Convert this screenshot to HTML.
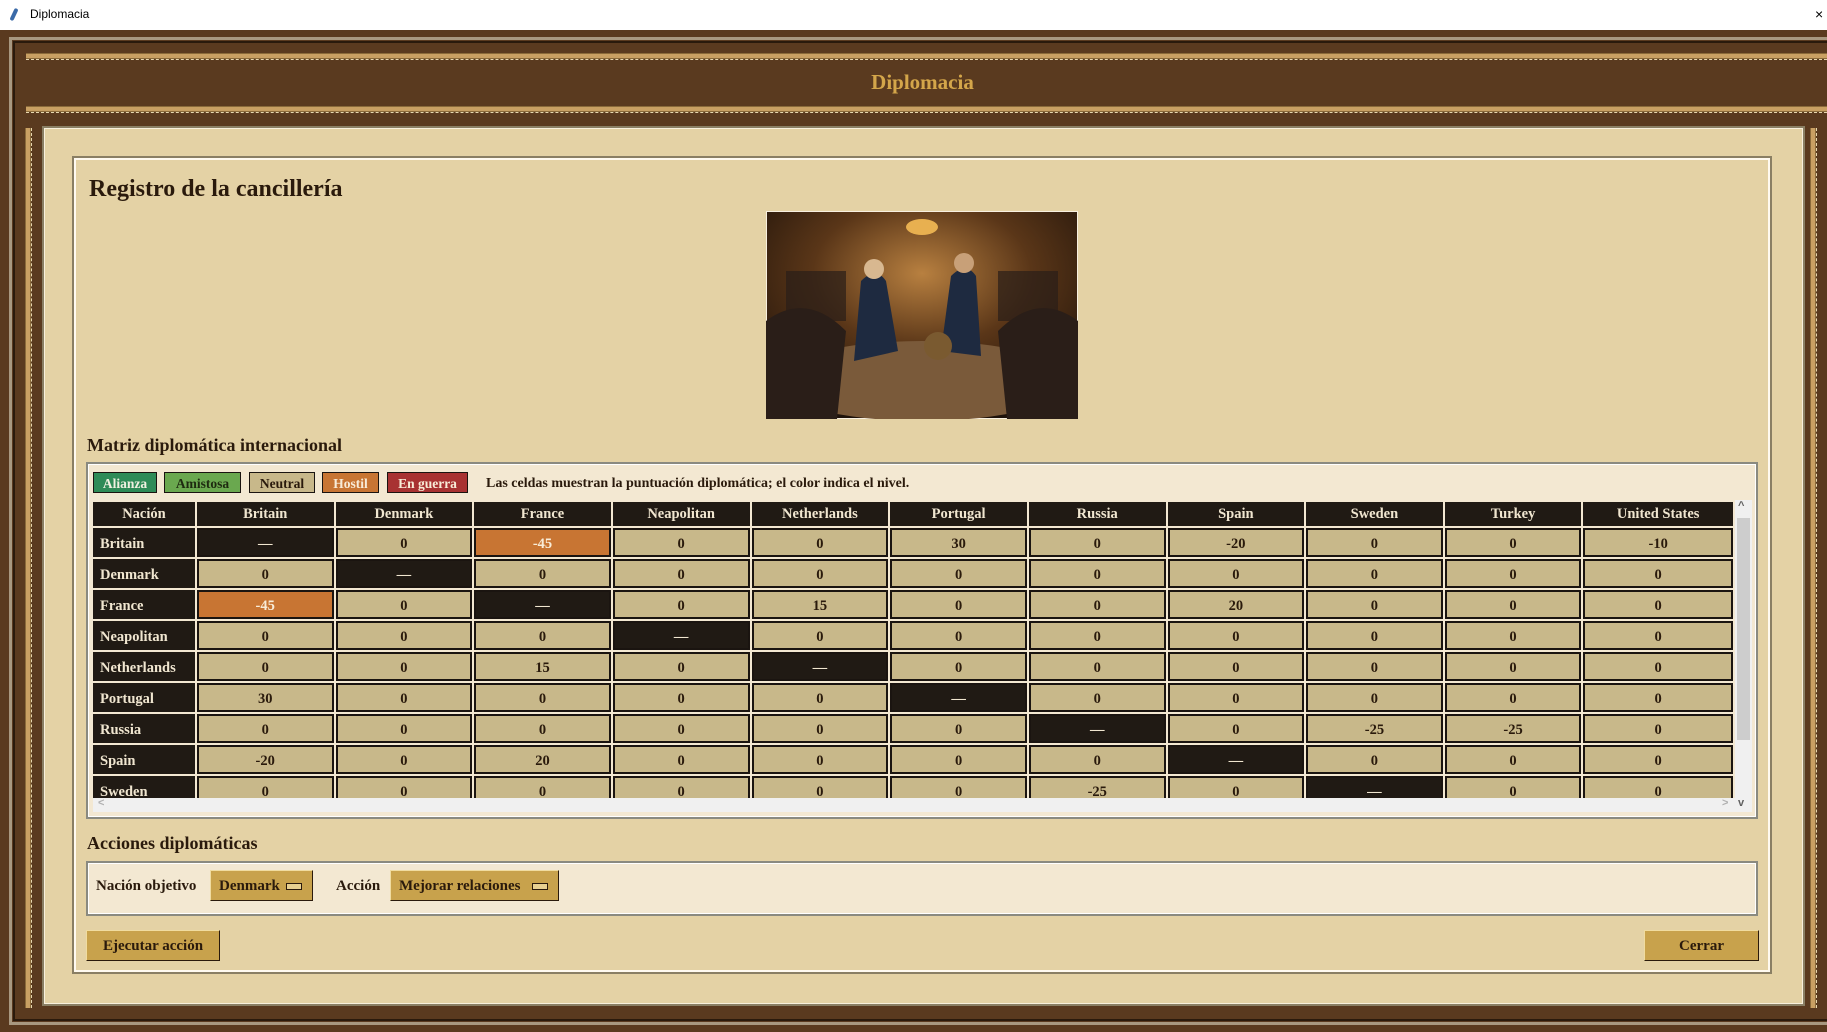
<!DOCTYPE html>
<html><head><meta charset="utf-8"><style>
*{margin:0;padding:0;box-sizing:border-box}
body{width:1827px;height:1032px;overflow:hidden;background:#5a3a1f;position:relative;font-family:"Liberation Serif",serif;font-weight:bold;color:#2a1a0c}
.a{position:absolute}
.rail{position:absolute;height:6px;background:#c9a063;border-top:1px solid #8a6a3a;border-bottom:1px solid #8a6a3a}
.rail:after{content:"";position:absolute;left:0;right:0;top:5px;border-top:1px dashed #e8d8b0}
.vrail{position:absolute;width:6px;background:#c9a063;border-left:1px solid #8a6a3a;border-right:1px solid #8a6a3a}
.vrail:after{content:"";position:absolute;top:0;bottom:0;left:5px;border-left:1px dashed #e8d8b0}
.btn{position:absolute;background:#c8a24c;border:1px solid #f0dca0;border-right-color:#2a1a0c;border-bottom-color:#2a1a0c;font-size:15px;line-height:30px;padding-left:8px}
.mb:after{content:"";position:absolute;right:10px;top:12px;width:14px;height:5px;background:#e8d090;border:1px solid #2a1a0c}
.leg{position:absolute;top:472px;height:21px;border:1px solid #1a1410;font-size:13.5px;line-height:21px;text-align:center}
table{border-collapse:separate;border-spacing:2px;font-size:14.5px;table-layout:fixed}
td{height:29px;border:2px solid #1a1410;background:#c8b88a;text-align:center;padding:3px 0 0 0}
td.d{background:#201a14;color:#f0e6d0}
td.h{background:#c87533;color:#f8ecd8}
td.l{background:#201a14;color:#f0e6d0;text-align:left;padding-left:5px;border-color:#201a14}
tr.hd td{background:#201a14;color:#f0e6d0;height:24px;border-color:#201a14;padding-top:1px}
</style></head><body>
<div class="a" style="left:0;top:0;width:1827px;height:30px;background:#fff;font-family:'Liberation Sans',sans-serif;font-weight:normal;font-size:12px;line-height:28px;color:#000;padding-left:30px">Diplomacia</div>
<div class="a" style="left:12px;top:8px;width:4px;height:13px;background:#3a6aa8;transform:rotate(25deg);border-radius:2px"></div>
<div class="a" style="left:1815px;top:6px;font-family:'Liberation Sans',sans-serif;font-weight:normal;font-size:14px;color:#000">×</div>
<div class="a" style="left:9px;top:37px;width:1818px;height:988px;border:3px solid #a89880;border-right:none"></div>
<div class="a" style="left:13px;top:41px;width:1814px;height:980px;border:2px solid #2a1a0c;border-right:none"></div>
<div class="rail" style="left:26px;top:53px;width:1801px"></div>
<div class="rail" style="left:26px;top:106px;width:1801px"></div>
<div class="a" style="left:0;width:1827px;top:70px;text-align:center;font-size:21px;color:#d4a64a;padding-left:18px">Diplomacia</div>
<div class="vrail" style="left:25px;top:128px;height:880px"></div>
<div class="vrail" style="left:1810px;top:128px;height:880px"></div>
<div class="a" style="left:42px;top:126px;width:1763px;height:880px;background:#e4d2a5;border:2px solid #8a7f64;box-shadow:inset 0 0 0 1px #f8f0dc"></div>
<div class="a" style="left:72px;top:156px;width:1700px;height:818px;border:2px solid #8a7f64;box-shadow:inset 0 0 0 2px #fffaf0"></div>
<div class="a" style="left:89px;top:176px;font-size:24px">Registro de la cancillería</div>
<svg class="a" style="left:766px;top:211px" width="312" height="208" viewBox="0 0 312 208">
<defs><radialGradient id="g" cx="50%" cy="30%" r="70%"><stop offset="0" stop-color="#b88040"/><stop offset=".5" stop-color="#5a3618"/><stop offset="1" stop-color="#1e120a"/></radialGradient></defs>
<rect width="312" height="208" fill="url(#g)" stroke="#f8f0e0" stroke-width="2"/>
<ellipse cx="156" cy="16" rx="16" ry="8" fill="#e8b050"/>
<rect x="20" y="60" width="60" height="50" fill="#2a1e18" opacity=".7"/><rect x="232" y="60" width="60" height="50" fill="#2a1e18" opacity=".7"/>
<ellipse cx="156" cy="170" rx="150" ry="40" fill="#7a5a3a"/>
<path d="M95 70 q15 -15 25 0 l12 70 l-44 10z" fill="#1e2a40"/>
<path d="M185 65 q15 -15 25 0 l5 80 l-40 -5z" fill="#1e2a40"/>
<circle cx="108" cy="58" r="10" fill="#d8b890"/><circle cx="198" cy="52" r="10" fill="#c8a078"/>
<path d="M0 110 q40 -30 80 10 l-10 98 h-70z" fill="#2a1e18"/>
<path d="M312 110 q-40 -30 -80 10 l10 98 h70z" fill="#2a1e18"/>
<circle cx="172" cy="135" r="14" fill="#7a5a30"/>
</svg>
<div class="a" style="left:87px;top:435px;font-size:18px">Matriz diplomática internacional</div>
<div class="a" style="left:86px;top:462px;width:1672px;height:357px;background:#f3e8d2;border:2px solid #8a8a80;box-shadow:inset 0 0 0 1px #fff"></div>
<div class="leg" style="left:93px;width:64px;background:#2e8b57;color:#f0f0e0">Alianza</div>
<div class="leg" style="left:164px;width:77px;background:#6aa84f;color:#1e2a10">Amistosa</div>
<div class="leg" style="left:249px;width:66px;background:#c8b88a;color:#2a1a0c">Neutral</div>
<div class="leg" style="left:322px;width:57px;background:#c87533;color:#f8ecd8">Hostil</div>
<div class="leg" style="left:387px;width:81px;background:#a83232;color:#f8ecd8">En guerra</div>
<div class="a" style="left:486px;top:476px;font-size:14px">Las celdas muestran la puntuación diplomática; el color indica el nivel.</div>
<div class="a" style="left:93px;top:500px;width:1642px;height:298px;overflow:hidden;background:#f3e8d2">
<table style="margin-left:-2px">
<colgroup><col style="width:102px"><col span="10" style="width:137px"><col style="width:150px"></colgroup>
<tr class="hd"><td>Nación</td><td>Britain</td><td>Denmark</td><td>France</td><td>Neapolitan</td><td>Netherlands</td><td>Portugal</td><td>Russia</td><td>Spain</td><td>Sweden</td><td>Turkey</td><td>United States</td></tr>
<tr><td class="l">Britain</td><td class="d">—</td><td>0</td><td class="h">-45</td><td>0</td><td>0</td><td>30</td><td>0</td><td>-20</td><td>0</td><td>0</td><td>-10</td></tr>
<tr><td class="l">Denmark</td><td>0</td><td class="d">—</td><td>0</td><td>0</td><td>0</td><td>0</td><td>0</td><td>0</td><td>0</td><td>0</td><td>0</td></tr>
<tr><td class="l">France</td><td class="h">-45</td><td>0</td><td class="d">—</td><td>0</td><td>15</td><td>0</td><td>0</td><td>20</td><td>0</td><td>0</td><td>0</td></tr>
<tr><td class="l">Neapolitan</td><td>0</td><td>0</td><td>0</td><td class="d">—</td><td>0</td><td>0</td><td>0</td><td>0</td><td>0</td><td>0</td><td>0</td></tr>
<tr><td class="l">Netherlands</td><td>0</td><td>0</td><td>15</td><td>0</td><td class="d">—</td><td>0</td><td>0</td><td>0</td><td>0</td><td>0</td><td>0</td></tr>
<tr><td class="l">Portugal</td><td>30</td><td>0</td><td>0</td><td>0</td><td>0</td><td class="d">—</td><td>0</td><td>0</td><td>0</td><td>0</td><td>0</td></tr>
<tr><td class="l">Russia</td><td>0</td><td>0</td><td>0</td><td>0</td><td>0</td><td>0</td><td class="d">—</td><td>0</td><td>-25</td><td>-25</td><td>0</td></tr>
<tr><td class="l">Spain</td><td>-20</td><td>0</td><td>20</td><td>0</td><td>0</td><td>0</td><td>0</td><td class="d">—</td><td>0</td><td>0</td><td>0</td></tr>
<tr><td class="l">Sweden</td><td>0</td><td>0</td><td>0</td><td>0</td><td>0</td><td>0</td><td>-25</td><td>0</td><td class="d">—</td><td>0</td><td>0</td></tr>
</table></div>
<div class="a" style="left:1735px;top:500px;width:17px;height:312px;background:#f0f0f0"></div>
<div class="a" style="left:1737px;top:518px;width:13px;height:222px;background:#cdcdcd"></div>
<div class="a" style="left:1738px;top:500px;font-size:11px;color:#606060;font-family:'Liberation Sans',sans-serif">^</div>
<div class="a" style="left:1738px;top:797px;font-size:11px;color:#606060;font-family:'Liberation Sans',sans-serif">v</div>
<div class="a" style="left:93px;top:798px;width:1642px;height:14px;background:#f0f0f0"></div>
<div class="a" style="left:98px;top:797px;font-size:11px;color:#b0b0b0;font-family:'Liberation Sans',sans-serif">&lt;</div>
<div class="a" style="left:1722px;top:797px;font-size:11px;color:#b0b0b0;font-family:'Liberation Sans',sans-serif">&gt;</div>
<div class="a" style="left:87px;top:833px;font-size:18px">Acciones diplomáticas</div>
<div class="a" style="left:86px;top:861px;width:1672px;height:55px;background:#f3e8d2;border:2px solid #8a8a80;box-shadow:inset 0 0 0 1px #fff"></div>
<div class="a" style="left:96px;top:878px;font-size:15px">Nación objetivo</div>
<div class="btn mb" style="left:210px;top:870px;width:103px;height:31px">Denmark</div>
<div class="a" style="left:336px;top:878px;font-size:15px">Acción</div>
<div class="btn mb" style="left:390px;top:870px;width:169px;height:31px">Mejorar relaciones</div>
<div class="btn" style="left:86px;top:930px;width:134px;height:31px;text-align:center;padding:0">Ejecutar acción</div>
<div class="btn" style="left:1644px;top:930px;width:115px;height:31px;text-align:center;padding:0">Cerrar</div>
</body></html>
